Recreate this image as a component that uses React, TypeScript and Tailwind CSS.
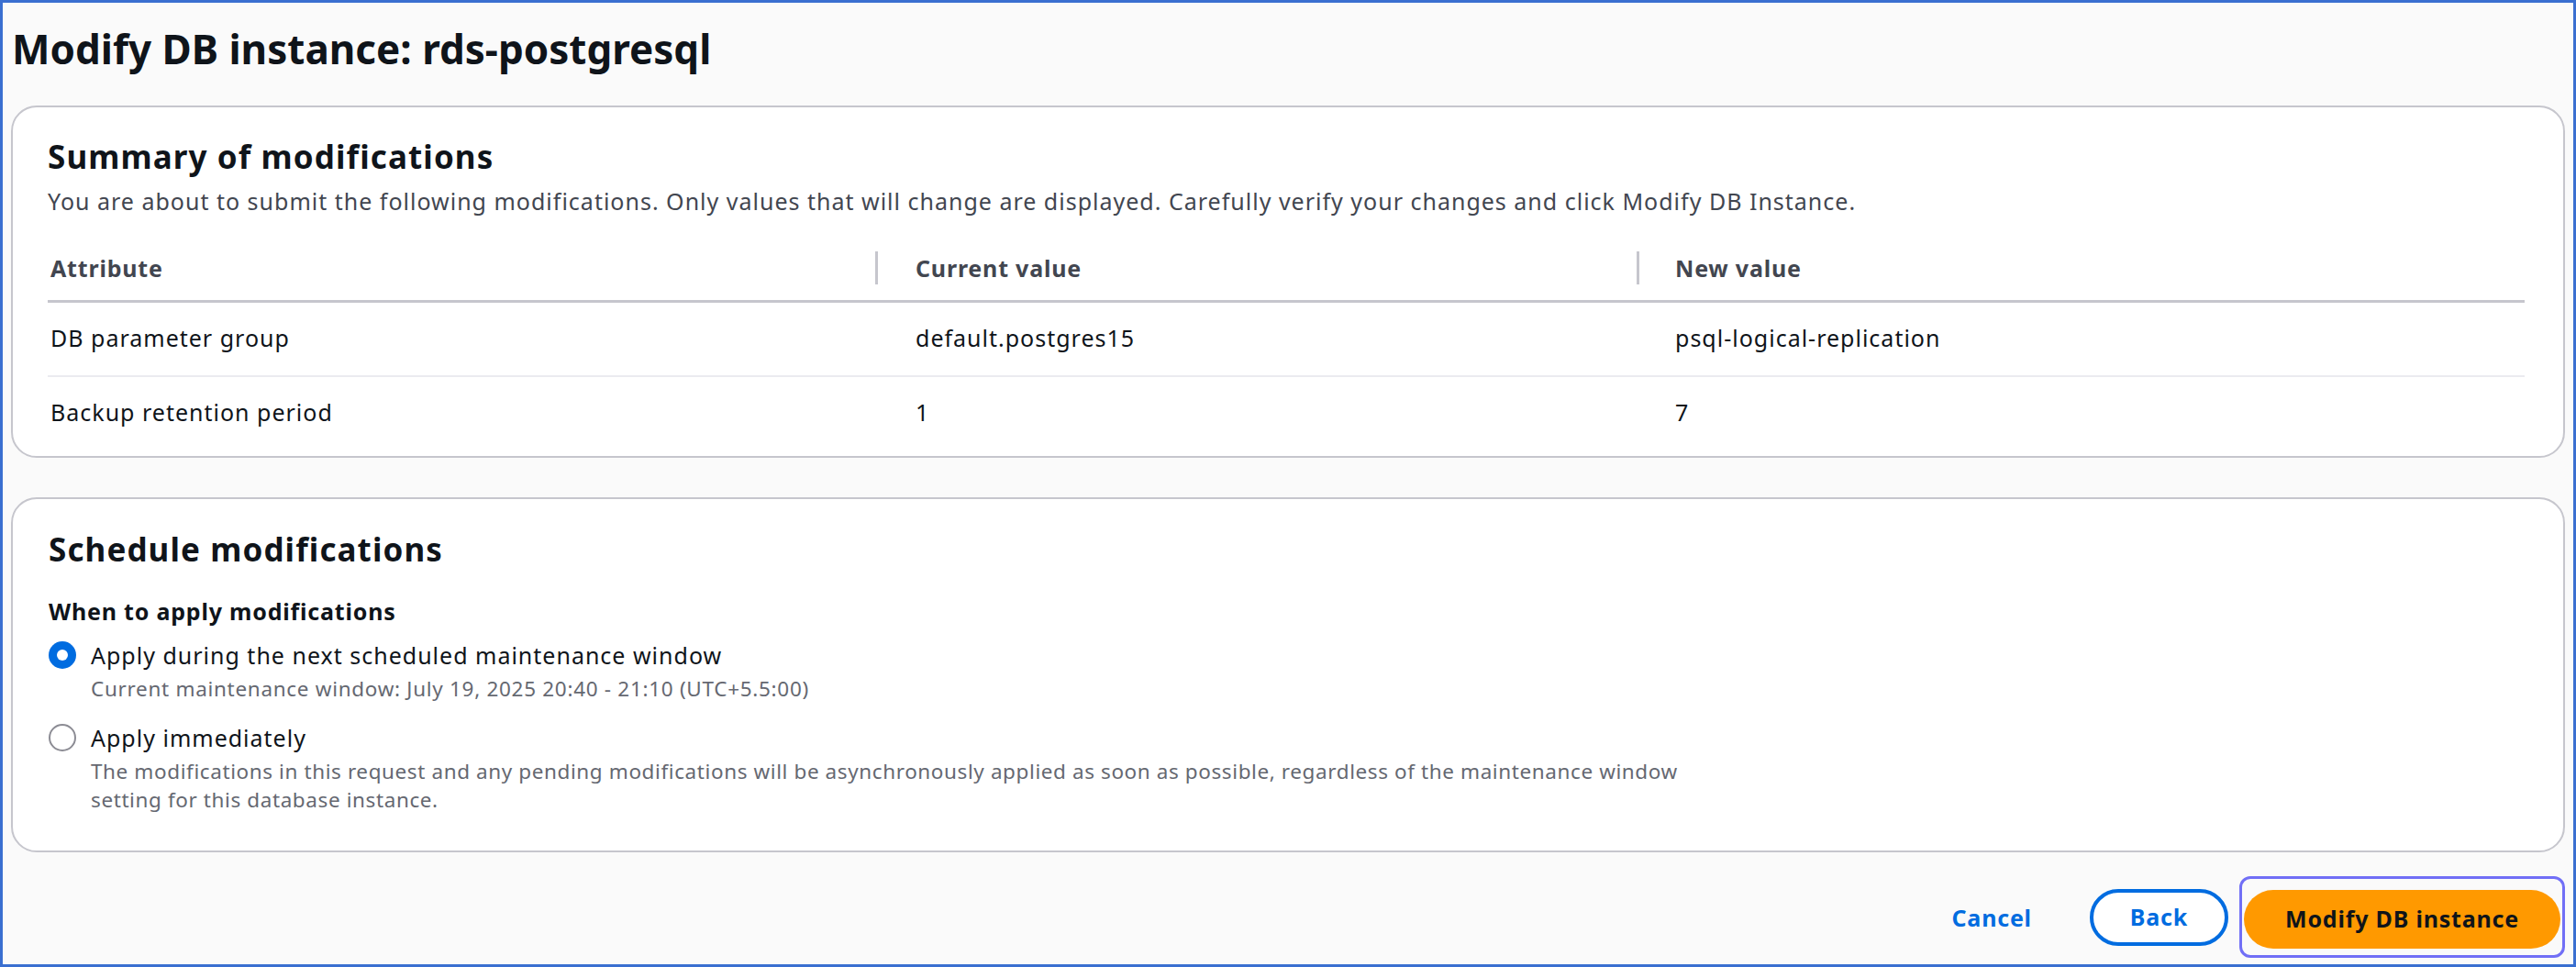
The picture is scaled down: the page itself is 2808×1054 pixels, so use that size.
const rows = [
  { attr: 'DB parameter group', current: 'default.postgres15', next: 'psql-logical-replication' },
  { attr: 'Backup retention period', current: '1', next: '7' },
]

function Radio({ checked }: { checked?: boolean }) {
  if (checked) {
    return (
      <span className="w-[30px] h-[30px] rounded-full bg-[#006ce0] flex items-center justify-center shrink-0">
        <span className="w-[12px] h-[12px] rounded-full bg-white" />
      </span>
    )
  }
  return <span className="w-[30px] h-[30px] rounded-full border-[2px] border-[#8c8c94] bg-white shrink-0" />
}

export default function App() {
  return (
    <div
      className="w-[2808px] h-[1054px] border-[3px] border-[#3a6fd0] bg-[#fafafa] px-[9px] flex flex-col text-[#0f141a]"
      style={{ fontFamily: '"Noto Sans", "Open Sans", sans-serif' }}
    >
      <h1 className="mt-[24px] text-[44px] leading-[52px] font-bold pl-[1px]">Modify DB instance: rds-postgresql</h1>

      {/* Summary */}
      <section className="mt-[36px] bg-white border-[2px] border-[#c6c6cd] rounded-[28px] px-[38px] pt-[33px] pb-[7px]">
        <h2 className="text-[35px] leading-[42px] font-bold tracking-[1.1px]">Summary of modifications</h2>
        <p className="mt-[9px] text-[25px] leading-[36px] tracking-[1px] text-[#424650]">
          You are about to submit the following modifications. Only values that will change are displayed. Carefully verify your changes and click Modify DB Instance.
        </p>

        <div className="mt-[37px] w-[2700px] text-[25px] leading-[36px]">
          <div className="grid grid-cols-[902px_830px_1fr] border-b-[3px] border-[#c6c6cd] pb-[17px] font-bold tracking-[0.8px] text-[#424650]">
            <div className="pl-[3px]">Attribute</div>
            <div className="border-l-[3px] border-[#c6c6cd] pl-[41px]">Current value</div>
            <div className="border-l-[3px] border-[#c6c6cd] pl-[39px]">New value</div>
          </div>
          {rows.map((r, i) => (
            <div
              key={r.attr}
              className={`grid grid-cols-[902px_830px_1fr] pt-[20px] pb-[23px] tracking-[1px] ${i === 0 ? 'border-b-[2px] border-[#ebebf0]' : ''}`}
            >
              <div className="pl-[3px]">{r.attr}</div>
              <div className="pl-[44px]">{r.current}</div>
              <div className="pl-[42px]">{r.next}</div>
            </div>
          ))}
        </div>
      </section>

      {/* Schedule */}
      <section className="mt-[43px] bg-white border-[2px] border-[#c6c6cd] rounded-[28px] px-[39px] pt-[34px] pb-[40px]">
        <h2 className="text-[35px] leading-[42px] font-bold tracking-[1.1px]">Schedule modifications</h2>
        <div className="mt-[28px] text-[25px] leading-[36px] font-bold tracking-[0.8px]">When to apply modifications</div>

        <div className="mt-[12px] flex items-start gap-[16px]">
          <div className="h-[36px] flex items-center"><Radio checked /></div>
          <div>
            <div className="text-[25px] leading-[36px] tracking-[1px]">Apply during the next scheduled maintenance window</div>
            <div className="mt-[3px] text-[22.5px] leading-[31px] tracking-[0.7px] text-[#656871]">
              Current maintenance window: July 19, 2025 20:40 - 21:10 (UTC+5.5:00)
            </div>
          </div>
        </div>

        <div className="mt-[20px] flex items-start gap-[16px]">
          <div className="h-[36px] flex items-center"><Radio /></div>
          <div>
            <div className="text-[25px] leading-[36px] tracking-[1px]">Apply immediately</div>
            <div className="mt-[3px] max-w-[1765px] text-[22.5px] leading-[31px] tracking-[0.6px] text-[#656871]">
              The modifications in this request and any pending modifications will be asynchronously applied as soon as possible, regardless of the maintenance window setting for this database instance.
            </div>
          </div>
        </div>
      </section>

      {/* Actions */}
      <div className="mt-[26px] flex justify-end items-center text-[25px] font-bold tracking-[0.8px]">
        <button className="px-[40px] leading-[36px] text-[#006ce0]">Cancel</button>
        <button className="ml-[23px] h-[62px] px-[40px] rounded-full border-[4px] border-[#006ce0] bg-white text-[#006ce0]">
          Back
        </button>
        <div className="ml-[12px] rounded-[12px] border-[3px] border-[#716ff6] px-[2px] pt-[12px] pb-[7px]">
          <button className="h-[64px] px-[45px] rounded-full bg-[#ff9900] text-[#0f141a]">
            Modify DB instance
          </button>
        </div>
      </div>
    </div>
  )
}
